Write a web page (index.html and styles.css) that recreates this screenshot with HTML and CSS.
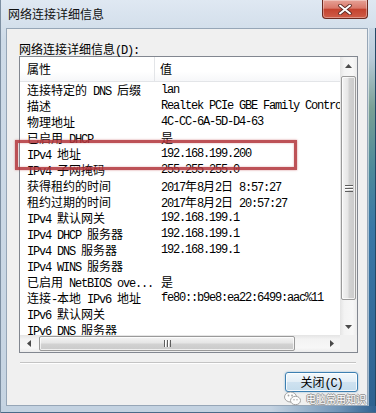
FILE: index.html
```html
<!DOCTYPE html>
<html lang="zh">
<head>
    <meta charset="UTF-8">
    <title>网络连接详细信息</title>
    <link rel="stylesheet" href="styles.css">
</head>
<body>
<div class="window">
    <div class="titlebar">
        <span class="title">网络连接详细信息</span>
        <div class="close-btn">
            <svg width="14" height="11" viewBox="0 0 14 11">
                <path d="M2 1.5L12 9.5M12 1.5L2 9.5" stroke="#5a2a24" stroke-width="3.6" stroke-linecap="round"/>
                <path d="M2 1.5L12 9.5M12 1.5L2 9.5" stroke="#fff" stroke-width="2" stroke-linecap="round"/>
            </svg>
        </div>
    </div>

    <div class="middle">
        <div class="client">
            <div class="caption">网络连接详细信息<span class="m">(D):</span></div>

            <div class="listbox">
                <div class="list">
                    <div class="list-head">
                        <div class="hname">属性</div>
                        <div class="hval">值</div>
                    </div>
                    <div class="row"><div class="name">连接特定的<span class="m"> DNS </span>后缀</div><div class="val">lan</div></div>
                    <div class="row"><div class="name">描述</div><div class="val">Realtek PCIe GBE Family Controller</div></div>
                    <div class="row"><div class="name">物理地址</div><div class="val">4C-CC-6A-5D-D4-63</div></div>
                    <div class="row"><div class="name">已启用<span class="m"> DHCP</span></div><div class="val"><span class="c">是</span></div></div>
                    <div class="row"><div class="name"><span class="m">IPv4 </span>地址</div><div class="val">192.168.199.200</div></div>
                    <div class="row"><div class="name"><span class="m">IPv4 </span>子网掩码</div><div class="val">255.255.255.0</div></div>
                    <div class="row"><div class="name">获得租约的时间</div><div class="val">2017<span class="c">年</span>8<span class="c">月</span>2<span class="c">日</span> 8:57:27</div></div>
                    <div class="row"><div class="name">租约过期的时间</div><div class="val">2017<span class="c">年</span>8<span class="c">月</span>2<span class="c">日</span> 20:57:27</div></div>
                    <div class="row"><div class="name"><span class="m">IPv4 </span>默认网关</div><div class="val">192.168.199.1</div></div>
                    <div class="row"><div class="name"><span class="m">IPv4 DHCP </span>服务器</div><div class="val">192.168.199.1</div></div>
                    <div class="row"><div class="name"><span class="m">IPv4 DNS </span>服务器</div><div class="val">192.168.199.1</div></div>
                    <div class="row"><div class="name"><span class="m">IPv4 WINS </span>服务器</div><div class="val"></div></div>
                    <div class="row"><div class="name">已启用<span class="m"> NetBIOS ove...</span></div><div class="val"><span class="c">是</span></div></div>
                    <div class="row"><div class="name">连接<span class="m">-</span>本地<span class="m"> IPv6 </span>地址</div><div class="val">fe80::b9e8:ea22:6499:aac%11</div></div>
                    <div class="row"><div class="name"><span class="m">IPv6 </span>默认网关</div><div class="val"></div></div>
                    <div class="row"><div class="name"><span class="m">IPv6 DNS </span>服务器</div><div class="val"></div></div>
                </div>

                <div class="vscroll">
                    <div class="arrow"><svg width="7" height="4" viewBox="0 0 7 4"><path d="M0 4L3.5 0L7 4Z"/></svg></div>
                    <div class="vtrack"><div class="vthumb"><div class="grip-h"></div></div></div>
                    <div class="arrow"><svg width="7" height="4" viewBox="0 0 7 4"><path d="M0 0L3.5 4L7 0Z"/></svg></div>
                </div>
                <div class="hscroll">
                    <div class="arrow"><svg width="4" height="7" viewBox="0 0 4 7"><path d="M4 0L0 3.5L4 7Z"/></svg></div>
                    <div class="htrack"><div class="hthumb"><div class="grip-v"></div></div></div>
                    <div class="arrow"><svg width="4" height="7" viewBox="0 0 4 7"><path d="M0 0L4 3.5L0 7Z"/></svg></div>
                </div>
                <div class="corner"></div>
            </div>

            <div class="separator"></div>

            <div class="footer">
                <button class="btn">关闭<span class="m">(C)</span></button>
            </div>

            <div class="highlight"></div>

            <div class="watermark">
                <svg width="17" height="15" viewBox="0 0 17 15">
                    <ellipse cx="6.5" cy="6" rx="6" ry="5" fill="#fff" stroke="#9a9a9a"/>
                    <ellipse cx="11.5" cy="9.5" rx="5" ry="4.2" fill="#fff" stroke="#9a9a9a"/>
                    <circle cx="4.5" cy="4.5" r="0.9" fill="#9a9a9a"/>
                    <circle cx="8" cy="4.5" r="0.9" fill="#9a9a9a"/>
                    <circle cx="10" cy="8.8" r="0.7" fill="#9a9a9a"/>
                    <circle cx="13" cy="8.8" r="0.7" fill="#9a9a9a"/>
                </svg>
                <span>电脑常用知识</span>
            </div>
        </div>
        <div class="edge"></div>
    </div>

    <div class="bottom"></div>
</div>
</body>
</html>
```

FILE: styles.css
```css
body {
    margin: 0;
    overflow: hidden;
    font-family: "Noto Sans CJK SC", sans-serif;
    font-size: 12px;
    color: #000;
}

.m {
    font-family: "Liberation Mono", monospace;
    font-size: 12px;
    letter-spacing: -1.2px;
}

.c {
    font-family: "Noto Sans CJK SC", sans-serif;
    font-size: 12px;
    letter-spacing: 0;
}

.window {
    width: 376px;
    height: 413px;
    display: flex;
    flex-direction: column;
    box-sizing: border-box;
    border-left: 1px solid #7d8fa2;
    background: linear-gradient(#dfe8f2, #cedbe8 40px, #c6d4e2);
}

/* 标题栏 */
.titlebar {
    height: 28px;
    display: flex;
    justify-content: space-between;
    align-items: flex-start;
    padding-left: 7px;
}

.title {
    line-height: 28px;
    font-size: 12px;
    color: #111;
}

.close-btn {
    width: 44px;
    height: 18px;
    margin-right: 8px;
    display: flex;
    align-items: center;
    justify-content: center;
    border: 1px solid #6b2a20;
    border-top: none;
    border-radius: 0 0 4px 4px;
    background: linear-gradient(#e6a296 0%, #d9786a 45%, #c4432f 52%, #cf5d48 100%);
    box-shadow: inset 0 0 0 1px rgba(255,255,255,0.35);
}

.middle {
    flex: 1;
    display: flex;
    padding-left: 5px;
}

.client {
    position: relative;
    flex: 1;
    background: #f0f0f0;
    border: 1px solid #96a6b7;
    padding: 13px 9px 0 12px;
}

.edge {
    width: 8px;
    box-sizing: border-box;
    border-right: 1px solid #244866;
    box-shadow: inset 1px 0 0 rgba(255,255,255,0.55);
    background: linear-gradient(#c9d7e5 0, #b9cbd9 30px, #7aa095 80px, #4d8a9a 140px, #3a77a6 200px, #2e6290 100%);
}

.bottom {
    height: 7px;
    border-bottom: 1px solid #4a6a88;
    box-sizing: border-box;
    background: linear-gradient(to right, #c3d2e1 0%, #c3d2e1 72%, #6f94b7 90%, #2f6190 100%);
}

.caption {
    line-height: 14px;
    height: 14px;
}

/* 列表框 */
.listbox {
    width: 339px;
    height: 297px;
    box-sizing: border-box;
    border: 1px solid #828790;
    background: #fff;
    display: grid;
    grid-template-columns: 320px 17px;
    grid-template-rows: 278px 17px;
}

.list {
    overflow: hidden;
    white-space: nowrap;
}

.list-head {
    height: 24px;
    display: flex;
    border-bottom: 1px solid #e3e5e8;
    background: linear-gradient(#fff, #fff 60%, #f6f7f9);
    line-height: 24px;
}

.hname {
    width: 135px;
    padding-left: 7px;
    box-sizing: border-box;
    border-right: 1px solid #e3e5e8;
}

.hval {
    padding-left: 5px;
}

.row {
    height: 16px;
    line-height: 16px;
    display: flex;
}

.name {
    width: 136px;
    flex-shrink: 0;
    padding-left: 7px;
    box-sizing: border-box;
}

.val {
    padding-left: 5px;
    font-family: "Liberation Mono", monospace;
    font-size: 12px;
    letter-spacing: -1.2px;
}

/* 滚动条 */
.vscroll {
    display: flex;
    flex-direction: column;
    background: linear-gradient(to right, #e4e4e4, #f3f3f3 25%, #f7f7f7 75%, #ececec);
}

.hscroll {
    display: flex;
    background: linear-gradient(#e4e4e4, #f3f3f3 25%, #f7f7f7 75%, #ececec);
}

.arrow {
    width: 17px;
    height: 17px;
    flex-shrink: 0;
    display: flex;
    align-items: center;
    justify-content: center;
}

.arrow svg {
    fill: #4a4a4a;
}

.vtrack {
    flex: 1;
    padding: 2px 1px 0;
}

.vthumb {
    height: 222px;
    border: 1px solid #9a9a9a;
    border-radius: 2px;
    background: linear-gradient(to right, #f4f4f4, #e6e6e6 45%, #d2d2d2 55%, #cacaca);
    box-shadow: inset 0 0 0 1px rgba(255,255,255,0.7);
    display: flex;
    align-items: center;
    justify-content: center;
}

.grip-h {
    width: 8px;
    height: 7px;
    background: repeating-linear-gradient(#5e5e5e 0 1px, #fff 1px 2px, transparent 2px 3px);
}

.htrack {
    flex: 1;
    padding: 1px 0 0 2px;
}

.hthumb {
    width: 254px;
    height: 13px;
    border: 1px solid #9a9a9a;
    border-radius: 2px;
    background: linear-gradient(#f4f4f4, #e6e6e6 45%, #d2d2d2 55%, #cacaca);
    box-shadow: inset 0 0 0 1px rgba(255,255,255,0.7);
    display: flex;
    align-items: center;
    justify-content: center;
}

.grip-v {
    width: 7px;
    height: 7px;
    background: repeating-linear-gradient(to right, #5e5e5e 0 1px, #fff 1px 2px, transparent 2px 3px);
}

.corner {
    background: #f0f0f0;
}

.separator {
    width: 336px;
    margin: 9px 0 0 1px;
    border-top: 1px solid #c4c4c4;
    border-bottom: 1px solid #fff;
}

.footer {
    display: flex;
    justify-content: flex-end;
    margin-top: 8px;
    width: 339px;
}

.btn {
    width: 73px;
    height: 20px;
    padding: 0;
    border: 1px solid #3c7fb1;
    border-radius: 3px;
    background: linear-gradient(#f2f8fc 0%, #e3eef6 48%, #cfe2f0 52%, #c4dcec 100%);
    box-shadow: inset 0 0 0 1px rgba(255,255,255,0.8), 0 0 2px rgba(60,140,200,0.6);
    font-family: "Noto Sans CJK SC", sans-serif;
    font-size: 12px;
    line-height: 18px;
    color: #000;
}

/* 红框标注 */
.highlight {
    position: absolute;
    left: 8px;
    top: 111px;
    width: 282px;
    height: 30px;
    box-sizing: border-box;
    border: 3px solid rgba(178, 52, 58, 0.85);
    box-shadow: 0 0 2px rgba(190, 70, 75, 0.6), inset 0 0 2px rgba(190, 70, 75, 0.5);
}

/* 水印 */
.watermark {
    position: absolute;
    left: 277px;
    top: 362px;
    display: flex;
    align-items: center;
    gap: 5px;
    opacity: 0.9;
}

.watermark span {
    font-size: 10px;
    color: #fff;
    text-shadow: 1px 0 0 #8a8a8a, -1px 0 0 #8a8a8a, 0 1px 0 #8a8a8a, 0 -1px 0 #8a8a8a;
}
```
